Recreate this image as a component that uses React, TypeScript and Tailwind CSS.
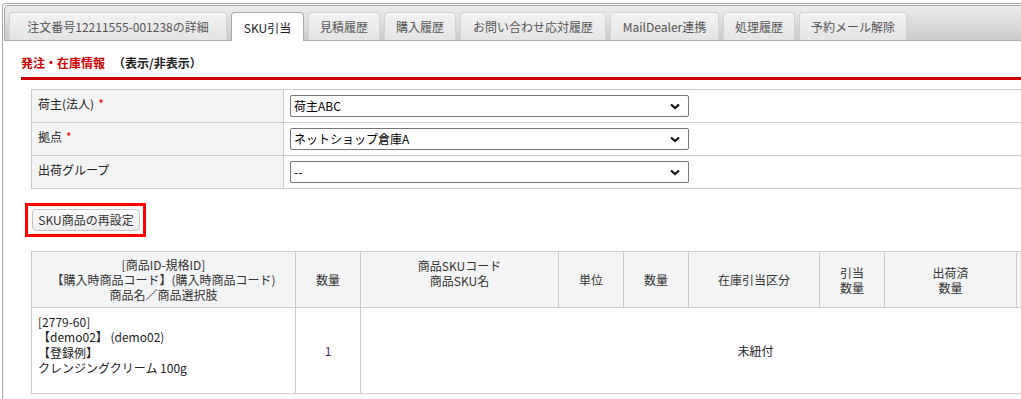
import { type ReactNode } from 'react'

const TABS: { label: string; w: string }[] = [
  { label: '注文番号12211555-001238の詳細', w: 'w-[218px]' },
  { label: 'SKU引当', w: 'w-[73px]' },
  { label: '見積履歴', w: 'w-[72px]' },
  { label: '購入履歴', w: 'w-[72px]' },
  { label: 'お問い合わせ応対履歴', w: 'w-[146px]' },
  { label: 'MailDealer連携', w: 'w-[109px]' },
  { label: '処理履歴', w: 'w-[72px]' },
  { label: '予約メール解除', w: 'w-[108px]' },
]

const FORM_ROWS: { label: string; required: boolean; value: string }[] = [
  { label: '荷主(法人)', required: true, value: '荷主ABC' },
  { label: '拠点', required: true, value: 'ネットショップ倉庫A' },
  { label: '出荷グループ', required: false, value: '--' },
]

function Chevron() {
  return (
    <svg width="10" height="7" viewBox="0 0 10 7" className="shrink-0">
      <path d="M1 1.5 L5 5 L9 1.5" fill="none" stroke="#111" strokeWidth="2.2" />
    </svg>
  )
}

function FakeSelect({ value }: { value: string }) {
  return (
    <div className="flex h-[22px] w-[399px] items-center justify-between rounded-[2px] border border-[#767676] bg-white pl-[3px] pr-[8px] text-[12px] leading-none text-black">
      <span>{value}</span>
      <Chevron />
    </div>
  )
}

function Th({ children, w }: { children: ReactNode; w: string }) {
  return (
    <th
      className={`${w} border border-[#cccccc] bg-[#f3f4f4] px-1 text-center align-middle text-[12px] font-normal leading-[15px] text-[#333]`}
    >
      {children}
    </th>
  )
}

export default function App() {
  return (
    <div
      className="h-[399px] w-[1021px] overflow-hidden bg-white text-[#333]"
      style={{ fontFamily: '"Noto Sans CJK JP", "Noto Sans", sans-serif' }}
    >
      <div className="ml-[2px] mt-[3px] h-[420px] w-[1160px] rounded-tl-[4px] border-l border-t border-[#aaaaaa] pl-[1px] pt-[1px]">
        {/* Tabs */}
        <div className="flex h-[36px] items-end gap-[4px] rounded-tl-[4px] border border-[#aaaaaa] bg-gradient-to-b from-[#ececec] to-[#cbcbcb] pl-[4px]">
          {TABS.map((t, i) =>
            i === 1 ? (
              <div
                key={t.label}
                className={`${t.w} -mb-px flex h-[29px] items-center justify-center rounded-t-[4px] border border-b-0 border-[#aaaaaa] bg-white pt-[1px] text-[12px] leading-none text-[#212121]`}
              >
                {t.label}
              </div>
            ) : (
              <div
                key={t.label}
                className={`${t.w} flex h-[28px] items-center justify-center rounded-t-[4px] border border-b-0 border-[#d3d3d3] bg-gradient-to-b from-[#f2f2f2] to-[#e4e4e4] text-[12px] leading-none text-[#555555]`}
              >
                {t.label}
              </div>
            ),
          )}
        </div>

        {/* Panel */}
        <div className="pl-[17px] pt-[14px]">
          <div className="flex items-center text-[12px] font-bold leading-[16px]">
            <span className="text-[#cc0000]">発注・在庫情報</span>
            <span className="ml-[8px] text-[#222]">（表示/非表示）</span>
          </div>
          <div className="mt-[6px] h-[3px] w-full bg-[#cc0000]" />

          {/* Form */}
          <table className="ml-[10px] mt-[9px] w-[1100px] border-collapse">
            <tbody>
              {FORM_ROWS.map((r) => (
                <tr key={r.label} className="h-[33px]">
                  <td className="w-[252px] border border-[#cccccc] bg-[#f3f4f4] pb-[5px] pl-[6px] align-middle text-[12px] leading-none text-[#222]">
                    {r.label}
                    {r.required && <span className="ml-[4px] text-[#e60000]">*</span>}
                  </td>
                  <td className="border border-[#cccccc] pl-[6px] align-middle">
                    <FakeSelect value={r.value} />
                  </td>
                </tr>
              ))}
            </tbody>
          </table>

          {/* Button */}
          <div className="ml-[4px] mt-[14px] flex w-fit border-[3px] border-[#ff0000] py-[3px] pl-[4px] pr-[3px]">
            <button className="h-[22px] w-[108px] rounded-[4px] border border-[#c5c5c5] bg-gradient-to-b from-[#fdfdfd] to-[#ececec] text-[12px] leading-none text-[#333]">
              SKU商品の再設定
            </button>
          </div>

          {/* Items table */}
          <table className="ml-[10px] mt-[14px] border-collapse">
            <thead>
              <tr className="h-[56px]">
                <Th w="w-[264px]">
                  [商品ID-規格ID]
                  <br />
                  【購入時商品コード】(購入時商品コード)
                  <br />
                  商品名／商品選択肢
                </Th>
                <Th w="w-[65px]">数量</Th>
                <Th w="w-[198px]">
                  <div className="-mt-[14px]">
                    商品SKUコード
                    <br />
                    商品SKU名
                  </div>
                </Th>
                <Th w="w-[65px]">単位</Th>
                <Th w="w-[65px]">数量</Th>
                <Th w="w-[131px]">在庫引当区分</Th>
                <Th w="w-[65px]">
                  引当
                  <br />
                  数量
                </Th>
                <Th w="w-[132px]">
                  出荷済
                  <br />
                  数量
                </Th>
                <Th w="w-[134px]">&nbsp;</Th>
              </tr>
            </thead>
            <tbody>
              <tr className="h-[86px]">
                <td className="border border-[#cccccc] px-[6px] pb-[12px] align-middle text-[12px] leading-[15.5px] text-[#222]">
                  [2779-60]
                  <br />
                  【demo02】 (demo02)
                  <br />
                  【登録例】
                  <br />
                  クレンジングクリーム 100g
                </td>
                <td className="border border-[#cccccc] text-center align-middle text-[12px] text-[#4a1a5a]">1</td>
                <td colSpan={7} className="border border-[#cccccc] text-center align-middle text-[12px] text-[#222]">
                  未紐付
                </td>
              </tr>
            </tbody>
          </table>
        </div>
      </div>
    </div>
  )
}
